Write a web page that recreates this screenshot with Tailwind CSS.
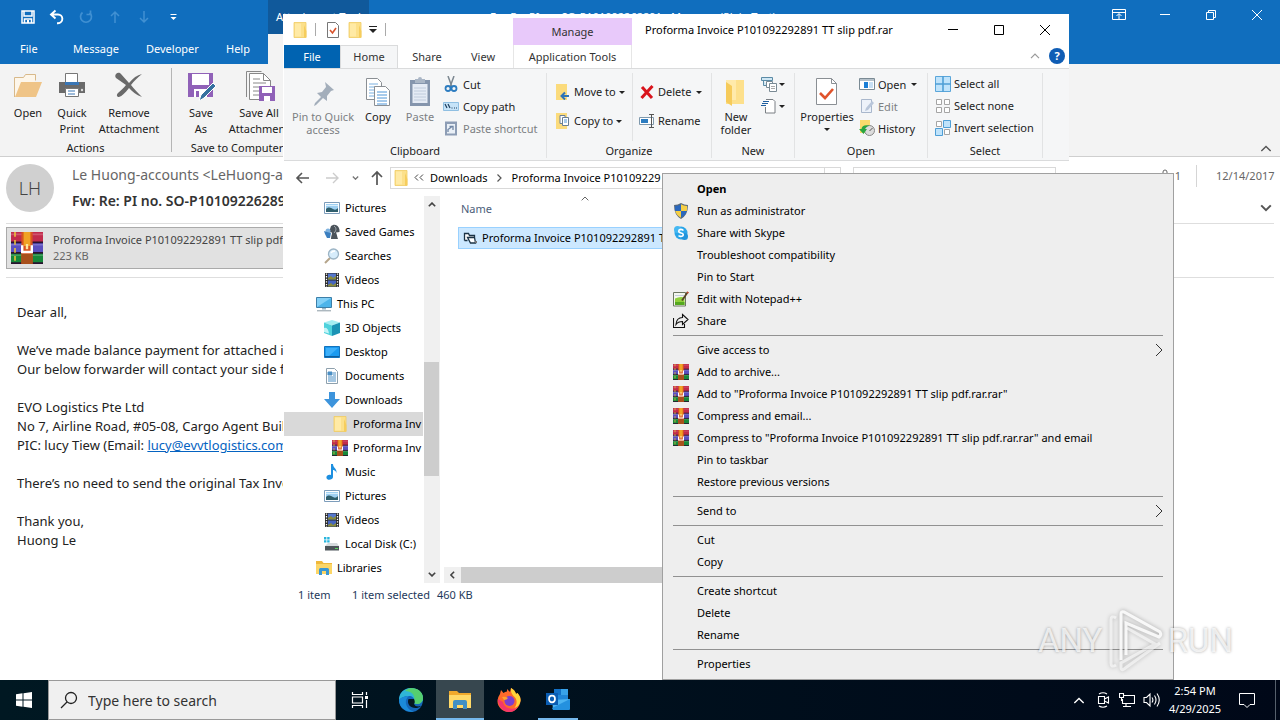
<!DOCTYPE html>
<html lang="en">
<head>
<meta charset="utf-8">
<title>Desktop</title>
<script src="https://cdn.jsdelivr.net/npm/@tailwindcss/browser@4"></script>
</head>
<body class="font-['Noto_Sans','Open_Sans',sans-serif] text-[11px] leading-[14px] text-[#1b1b1b]">

<!-- Icon sprite -->
<svg class="hidden" aria-hidden="true">
  <symbol id="rar" viewBox="0 0 16 16">
    <rect x="0" y="0" width="16" height="5.4" fill="#c22b4c"/><rect x="0" y="5.4" width="16" height="5" fill="#5a4fc0"/><rect x="0" y="10.4" width="16" height="5.6" fill="#17883a"/>
    <path d="M0 1.2h16M0 6.4h16M0 11.6h16" stroke="#fff" stroke-opacity=".2" stroke-width=".8"/>
    <path d="M0 5.2h16M0 10.4h16M0 15.6h16" stroke="#2a1230" stroke-width=".9"/>
    <path d="M2 0v16" stroke="#e9c13a" stroke-width=".8" stroke-dasharray="2.4 1.600"/>
    <rect x="5.2" y="0" width="5.6" height="16" fill="#d9541f"/><rect x="5.2" y="11" width="5.6" height="5" fill="#a8501c"/>
    <rect x="6.3" y="0" width="3.4" height="7" fill="#f0a224"/>
    <path d="M5.6 6.6v3.400h4.800V6.600" fill="none" stroke="#fff" stroke-width="1.200"/><path d="M8 6v2.600" stroke="#fbe6a0" stroke-width="1.200"/>
  </symbol>
  <symbol id="folder" viewBox="0 0 14 16">
    <path d="M1 .5h12v15H1z" fill="#fce08a" stroke="#f0cb62" stroke-width=".8"/><path d="M11 3l2.400 6v6.500H11z" fill="#f6cd5c"/><path d="M2 1.500h6v13H2z" fill="#ffeaa5"/>
  </symbol>
  <symbol id="caret" viewBox="0 0 6 3"><path d="M0 0h6L3 3z" fill="#222"/></symbol>
  <symbol id="up" viewBox="0 0 10 6"><path d="M1 5.200l4-4 4 4" fill="none" stroke="currentColor" stroke-width="1.200"/></symbol>
  <symbol id="down" viewBox="0 0 10 6"><path d="M1 .8l4 4 4-4" fill="none" stroke="currentColor" stroke-width="1.700"/></symbol>
  <symbol id="right" viewBox="0 0 8 14"><path d="M1 1l6 6-6 6" fill="none" stroke="#333" stroke-width="1"/></symbol>
  <symbol id="pictures" viewBox="0 0 16 16"><path d="M.5 2.500h15v11H.5z" fill="#fff" stroke="#7d9dbb"/><path d="M2 4h12v8H2z" fill="#9fd0f2"/><path d="M2 9c3-3 5-1 7 0s3 1 5-1v4H2z" fill="#2f5f6d"/><path d="M2 5.500h12" stroke="#d9effc"/></symbol>
  <symbol id="games" viewBox="0 0 16 16"><path d="M7 2l2-1c5-1 7 4 6.500 7L12 8.500c1 2 1 4 2 6.500H7c0-3 1-4 1-6.500L5 8z" fill="#4b535b"/><path d="M10 2c3 2 2 5 0 7" stroke="#a7afb5" fill="none"/><circle cx="4" cy="7" r="2.500" fill="#7fb2df"/><path d="M0 7l3 1 4 1-1 5H3L1 10z" fill="#3b7fc0"/></symbol>
  <symbol id="searches" viewBox="0 0 16 16"><path d="M6 10L1 15" stroke="#b5a58b" stroke-width="2"/><circle cx="9.500" cy="6" r="5" fill="#d6ecfb" stroke="#9bb3c4" stroke-width="1.300"/><path d="M7 5c1-2 3-2 4-2" stroke="#fff" stroke-width="1.300" fill="none"/></symbol>
  <symbol id="videos" viewBox="0 0 16 16"><path d="M1 1h14v14H1z" fill="#2b2b2b"/><path d="M4 1.500h8v6H4z" fill="#5577cc"/><path d="M4 8.500h8v6H4z" fill="#4565c0"/><path d="M4 6l3-2 2 2 3-2v3.500H4zM4 13l3-2 2 2 3-2v3.500H4z" fill="#8a8c3a"/><path d="M2.500 1.500v14M13.500 1.500v14" stroke="#fff" stroke-width="1.300" stroke-dasharray="1.300 1.300"/></symbol>
  <symbol id="pc" viewBox="0 0 16 16"><path d="M.5 1.500h15v10H.5z" fill="#4db4ea" stroke="#3d7fa8"/><path d="M1 2h14L1 11z" fill="#83d0f7"/><path d="M6 12h4v1.500H6z" fill="#9bb6c6"/><path d="M1 14.800h14" stroke="#8a9aa4"/></symbol>
  <symbol id="objects" viewBox="0 0 16 16"><path d="M8 0l8 2.500L8 5.500 0 2.500z" fill="#a6eef2"/><path d="M0 2.500l8 3V16l-8-3z" fill="#4fd2dc"/><path d="M16 2.500l-8 3V16l8-3z" fill="#1b93b5"/><path d="M0 8q4-1 5 5.500L0 12z" fill="#c4f5f7"/></symbol>
  <symbol id="desk" viewBox="0 0 16 16"><path d="M.5 2.500h15v11H.5z" fill="#1a9af0" stroke="#1273bd"/><path d="M2 4h12l-9 8H2z" fill="#3eb0fa"/><path d="M1 12.500h14" stroke="#0d5e9e"/></symbol>
  <symbol id="docs" viewBox="0 0 16 16"><path d="M2.500.5h8l3 3v12h-11z" fill="#fff" stroke="#8ea0ad"/><path d="M4 4h4v3H4zM4 9h8M4 11h8M4 13h8M9 5h3M9 7h3" fill="#4a8ec4" stroke="#4a8ec4"/></symbol>
  <symbol id="dl" viewBox="0 0 16 16"><path d="M5 0h6v7h5l-8 9-8-9h5z" fill="#3d94dc"/></symbol>
  <symbol id="music" viewBox="0 0 16 16"><path d="M7 0h2c0 4 4 4 3.500 9-1-3-3-3-3.500-3v7c0 3-6 4-6.500 1C2 11 5 10 7 11z" fill="#1d8fe0"/></symbol>
  <symbol id="disk" viewBox="0 0 16 16"><path d="M0 1h2.400v2.400H0zM3.200 1h2.400v2.400H3.200zM0 4.200h2.400v2.400H0zM3.200 4.200h2.400v2.400H3.200z" fill="#28b5dd"/><path d="M4 7h9l2 3H1z" fill="#d5dadd"/><path d="M1 10h14v4.500H1z" fill="#4d555a"/><path d="M11 12.500h3" stroke="#58d65d"/></symbol>
  <symbol id="lib" viewBox="0 0 16 16"><path d="M0 1h6l1.500 2H16v11H0z" fill="#f0b83a"/><path d="M0 4h16v10H0z" fill="#fcd667"/><path d="M3 15V9.500q0-1.500 1.500-1.500h7Q13 8 13 9.500V15h-3v-4H6v4z" fill="#3b97d3"/></symbol>
</svg>

<div class="relative flex h-screen flex-col overflow-hidden bg-white">

  <!-- Mail window -->
  <main class="flex min-h-0 flex-1 flex-col overflow-hidden bg-white">
    <header class="flex h-16 shrink-0 bg-[#106ebe] text-white">
      <div class="flex w-[268px] shrink-0 flex-col">
        <div class="flex h-[34px] items-center gap-[13px] pl-5">
          <button aria-label="Save" class="w-4"><svg class="size-4" viewBox="0 0 16 16"><path d="M2 2h12v12H2zM4 2v5h8V2M4.500 14v-4h7v4" fill="none" stroke="#fff" stroke-width="1.500"/><path d="M7 11h2v3H7z" fill="#fff"/></svg></button>
          <button aria-label="Undo" class="w-4"><svg class="size-4" viewBox="0 0 16 16"><path d="M6.500 1.500L2 5.500l4.500 4M2 5.500h7a4.300 4.300 0 010 8.700H8" fill="none" stroke="#fff" stroke-width="1.900"/></svg></button>
          <button aria-label="Redo" class="w-4"><svg class="size-4" viewBox="0 0 16 16"><path d="M4.500 3.500a5.500 5.500 0 107 0M12.500 1.500v4h-4" fill="none" stroke="#4090d2" stroke-width="1.700"/></svg></button>
          <button aria-label="Previous" class="w-4"><svg class="size-4" viewBox="0 0 16 16"><path d="M8 14V3M4 7l4-4 4 4" fill="none" stroke="#4090d2" stroke-width="1.500"/></svg></button>
          <button aria-label="Next" class="w-4"><svg class="size-4" viewBox="0 0 16 16"><path d="M8 2v11M4 9l4 4 4-4" fill="none" stroke="#4090d2" stroke-width="1.500"/></svg></button>
          <button aria-label="Customize" class="w-4"><svg class="size-4" viewBox="0 0 16 16"><path d="M5.500 5.500h6" stroke="#fff"/><path d="M5.500 8h6l-3 3z" fill="#fff"/></svg></button>
        </div>
        <nav class="flex h-[30px] items-center pl-5">
          <button class="w-[53px] text-left">File</button><button class="w-[73px] text-left">Message</button><button class="w-20 text-left">Developer</button><button>Help</button>
        </nav>
      </div>
      <div class="flex w-[101px] shrink-0 flex-col">
        <div class="h-[34px] bg-[#10599b] pl-2 leading-[34px] whitespace-nowrap">Attachment Tools</div>
        <div class="h-[30px] bg-[#f3f3f3]"></div>
      </div>
      <div class="ml-[121px] h-[34px] flex-1 leading-[34px] whitespace-nowrap">Fw: Re: PI no. SO-P101092262891 - Message (Plain Text)</div>
      <div class="flex h-[30px] shrink-0 items-center gap-[30px] pr-[15px]">
        <button aria-label="Ribbon options"><svg class="h-4 w-4" viewBox="0 0 16 16"><path d="M1.500 2.500h13v10h-13zM1.500 5.500h13M8 12V7M5.500 9L8 6.500 10.500 9" fill="none" stroke="#fff"/></svg></button>
        <button aria-label="Minimize"><svg class="h-4 w-4" viewBox="0 0 16 16"><path d="M3 7.500h10" stroke="#fff"/></svg></button>
        <button aria-label="Restore"><svg class="h-4 w-4" viewBox="0 0 16 16"><path d="M3.500 5.500h7v7h-7zM5.500 5.500v-2h7v7h-2" fill="none" stroke="#fff"/></svg></button>
        <button aria-label="Close"><svg class="h-4 w-4" viewBox="0 0 16 16"><path d="M3 3l10 10M13 3L3 13" stroke="#fff"/></svg></button>
      </div>
    </header>

    <section class="flex h-[93px] shrink-0 border-b border-[#cfcfcf] bg-[#f3f3f3]">
      <div class="flex w-[171px] shrink-0 flex-col">
        <div class="flex h-[77px] pt-1.5 pl-1.5 text-center">
          <button class="flex w-11 flex-col items-center"><svg class="h-8 w-8" viewBox="0 0 32 32"><path d="M2.500 27V7.500h9l2-3h10v6" fill="#fdf6ea" stroke="#d8b98a"/><path d="M3 27L9 12h21l-6 15z" fill="#efc487"/></svg><span class="mt-[3px] leading-4">Open</span></button>
          <button class="flex w-11 flex-col items-center"><svg class="h-8 w-8" viewBox="0 0 32 32"><path d="M3 12h26v11H3z" fill="#6a6a6a"/><path d="M9.500 3.500h12v10h-12z" fill="#fff" stroke="#777"/><path d="M9 12h14v3H9z" fill="#3a76b5"/><path d="M9.500 18.500h13v8h-13z" fill="#fff" stroke="#777"/><path d="M12 21h7M12 24h7" stroke="#3a76b5"/><circle cx="26" cy="20" r="1.200" fill="#ddd"/></svg><span class="mt-[3px] leading-4">Quick<br>Print</span></button>
          <button class="flex w-[70px] flex-col items-center"><svg class="h-8 w-8" viewBox="0 0 32 32"><path d="M3 4c2-2 4-1 5 0l8 9c4-5 8-8 13-9-4 3-8 7-11 11 3 4 7 8 11 12-6-2-10-6-13-9-4 5-7 8-10 9-2 0-3-2-1-4 3-3 6-5 8-8L3 8C2 7 2 5 3 4z" fill="#6a6a6a"/></svg><span class="mt-[3px] leading-4">Remove<br>Attachment</span></button>
        </div>
        <div class="text-center">Actions</div>
      </div>
      <div class="mt-1 h-[84px] w-px shrink-0 bg-[#b5b5b5]"></div>
      <div class="flex w-[130px] shrink-0 flex-col">
        <div class="flex h-[77px] pt-1.5 text-center">
          <button class="flex w-[58px] flex-col items-center"><svg class="h-8 w-8" viewBox="0 0 32 32"><path d="M3 3h25v24H3z" fill="#9061b8"/><path d="M7 4h17v11H7z" fill="#fff"/><path d="M9 19h13v8H9z" fill="#fff"/><path d="M11 21h3v6h-3z" fill="#9061b8"/><path d="M14 31l2-6 12-12 3 3-12 12z" fill="#35719f" stroke="#fff"/></svg><span class="mt-[3px] leading-4">Save<br>As</span></button>
          <button class="flex w-[58px] flex-col items-center whitespace-nowrap"><svg class="h-8 w-8" viewBox="0 0 32 32"><path d="M3.500 27V1.500h15" fill="none" stroke="#888"/><path d="M6.500 29.500v-26h14l7 7v19z" fill="#fff" stroke="#888"/><path d="M20.500 3.500v7h7M10 13h13M10 17h13M10 21h8M10 25h6M10 9h7" fill="none" stroke="#888"/><path d="M16 16h16v15H16z" fill="#9061b8"/><path d="M19 17h10v6H19zM21 26h6v5h-6z" fill="#fff"/></svg><span class="mt-[3px] leading-4">Save All<br>Attachment</span></button>
        </div>
        <div class="text-center whitespace-nowrap">Save to Computer</div>
      </div>
      <button aria-label="Collapse ribbon" class="mt-auto mr-2 mb-1 ml-auto text-[#555]"><svg class="h-[7px] w-3" viewBox="0 0 10 6"><use href="#up"/></svg></button>
    </section>

    <section class="mx-1.5 flex h-[67px] shrink-0 border-b border-[#dedede] pt-[7px]">
      <div class="flex size-12 shrink-0 items-center justify-center rounded-full bg-[#d0d0d0] text-lg font-light text-[#444]">LH</div>
      <div class="ml-[18px] flex flex-col whitespace-nowrap">
        <span class="text-sm leading-[22px] text-[#666]">Le Huong-accounts &lt;LeHuong-a</span>
        <span class="mt-1 text-sm leading-[22px] font-semibold text-[#333]">Fw: Re: PI no. SO-P10109226289</span>
      </div>
      <div class="ml-auto flex flex-col text-[#666]">
        <div class="flex h-6 items-center">
          <svg class="h-4 w-3" viewBox="0 0 12 16"><path d="M2 5v6a3 3 0 006 0V4a2 2 0 00-4 0v7" fill="none" stroke="#666"/></svg><span class="pl-1">1</span>
          <span class="mr-4 ml-[15px] h-[22px] w-px bg-[#d5d5d5]"></span><span class="w-[61px] pl-[3px]">12/14/2017</span>
        </div>
        <button aria-label="Expand" class="mt-4 mr-0.5 ml-auto text-[#555]"><svg class="h-2 w-3"><use href="#down"/></svg></button>
      </div>
    </section>

    <div class="mx-1.5 shrink-0 border-b border-[#dedede] pt-[3px] pb-2">
      <button class="flex h-[42px] w-[300px] items-center overflow-hidden border border-[#aaa] bg-[#e1e1e1] pl-1 text-left whitespace-nowrap">
        <svg class="size-8 shrink-0"><use href="#rar"/></svg>
        <span class="ml-2.5 leading-4 text-[#444]">Proforma Invoice P101092292891 TT slip pdf<br><span class="text-[#666]">223 KB</span></span>
      </button>
    </div>

    <article class="pt-[25px] pl-[17px] text-[13px] leading-[19px] whitespace-nowrap text-[#222]">
      <p>Dear all,</p><br>
      <p>We’ve made balance payment for attached i</p>
      <p>Our below forwarder will contact your side f</p><br>
      <p>EVO Logistics Pte Ltd</p>
      <p>No 7, Airline Road, #05-08, Cargo Agent Build</p>
      <p>PIC: lucy Tiew (Email: <a href="#" class="text-[#0563c1] underline">lucy@evvtlogistics.com</a></p><br>
      <p>There’s no need to send the original Tax Invo</p><br>
      <p>Thank you,</p>
      <p>Huong Le</p>
    </article>
  </main>

  <!-- File manager window -->
  <section class="absolute top-[14px] left-[283px] flex h-[593px] w-[786px] flex-col bg-white pl-px">
    <header class="flex h-[55px] shrink-0 border-b border-[#dadbdc]">
      <div class="flex w-[229px] shrink-0 flex-col">
        <div class="flex h-[31px] items-center pl-[9px]">
          <svg class="h-4 w-3.5"><use href="#folder"/></svg><span class="ml-2 h-[13px] w-px bg-[#aaa]"></span>
          <button aria-label="Properties" class="ml-2.5"><svg class="h-4 w-3.5" viewBox="0 0 14 16"><path d="M1.500.5h8l3 3v12h-11z" fill="#fff" stroke="#777"/><path d="M4 8l2.500 3L10 6" fill="none" stroke="#d9532c" stroke-width="1.600"/></svg></button>
          <button aria-label="New folder" class="ml-2"><svg class="h-4 w-3.5"><use href="#folder"/></svg></button>
          <button aria-label="Customize" class="ml-[7px]"><svg class="h-[7px] w-2" viewBox="0 0 8 7"><path d="M0 .5h8" stroke="#222"/><path d="M0 3h8L4 7z" fill="#222"/></svg></button>
          <span class="ml-2 h-[13px] w-px bg-[#aaa]"></span>
        </div>
        <nav class="flex h-[23px] items-stretch text-[#333]">
          <button class="w-14 bg-[#0063b1] text-white">File</button>
          <button class="w-[58px] border border-b-0 border-[#dadbdc] bg-[#f5f6f7]">Home</button>
          <button class="w-[58px]">Share</button>
          <button class="w-[54px]">View</button>
        </nav>
      </div>
      <div class="flex w-[119px] shrink-0 flex-col pt-1 text-center text-[#333]">
        <div class="h-[27px] bg-[#e8c9fa] leading-[28px]">Manage</div>
        <button class="h-[23px] border-x border-[#e6e6e6]">Application Tools</button>
      </div>
      <h1 class="ml-[13px] flex h-[31px] items-center whitespace-nowrap text-black">Proforma Invoice P101092292891 TT slip pdf.rar</h1>
      <div class="ml-auto flex flex-col">
        <div class="flex h-[31px] items-center gap-[30px] pr-4">
          <button aria-label="Minimize"><svg class="size-4" viewBox="0 0 16 16"><path d="M3 7.500h10" stroke="#000"/></svg></button>
          <button aria-label="Maximize"><svg class="size-4" viewBox="0 0 16 16"><path d="M3.500 3.500h9v9h-9z" fill="none" stroke="#000"/></svg></button>
          <button aria-label="Close"><svg class="size-4" viewBox="0 0 16 16"><path d="M3 3l10 10M13 3L3 13" stroke="#000"/></svg></button>
        </div>
        <div class="flex h-[22px] items-center justify-end gap-[9px] pr-1 text-[#999]">
          <button aria-label="Collapse ribbon"><svg class="h-1.5 w-2.5"><use href="#up"/></svg></button>
          <button aria-label="Help" class="flex size-4 items-center justify-center rounded-full bg-[#0f5db5] font-bold text-white">?</button>
        </div>
      </div>
    </header>

    <div class="flex h-[92px] shrink-0 border-b border-[#dadbdc] bg-[#f5f6f7] pt-1 pb-0.5 text-[#222]">
      <div class="flex w-[263px] shrink-0 flex-col justify-between border-r border-[#e2e3e4]">
        <div class="flex h-[68px] pl-1.5 leading-[13px]">
          <button class="flex w-[66px] flex-col items-center text-[#7c7f83]"><svg class="mt-1.5 h-7 w-7" viewBox="0 0 28 28"><path d="M16 3l9 8-3 1-4 5 0 5-4-3-7 7-2 1 1-3 6-6-4-4 5-1 4-5z" fill="#a3aebb"/></svg><span class="mt-[3px]">Pin to Quick access</span></button>
          <button class="flex w-11 flex-col items-center"><svg class="mt-[3px] h-8 w-7" viewBox="0 0 28 32"><path d="M2.500 2.500h11l4 4v17h-15z" fill="#fff" stroke="#8a8f94"/><path d="M5 8h9M5 11h9M5 14h9M5 17h9M5 20h9" stroke="#7ab0e0"/><path d="M10.500 10.500h11l4 4v15h-15z" fill="#fff" stroke="#8a8f94"/><path d="M13 16h10M13 19h10M13 22h10M13 25h10M13 28h10" stroke="#4f96d8"/></svg><span class="mt-0.5">Copy</span></button>
          <button class="flex w-10 flex-col items-center text-[#7c7f83]"><svg class="mt-[3px] h-8 w-7" viewBox="0 0 28 32"><path d="M4 4h20v26H4z" fill="#8595ad"/><path d="M6.500 8h15v19h-15z" fill="#e5ebf5"/><path d="M9 3h3a2 2 0 014 0h3v4H9z" fill="#aab6c6"/><path d="M8 12h12M8 15h12M8 18h12M8 21h12M8 24h12" stroke="#c0cbdc"/></svg><span class="mt-0.5">Paste</span></button>
          <div class="ml-[3px] flex flex-col whitespace-nowrap">
            <button class="flex h-[22px] items-center gap-1"><svg class="size-4" viewBox="0 0 16 16"><path d="M5 0l4 11M11 0L7 11" stroke="#7c8790" stroke-width="1.500"/><circle cx="5" cy="12.500" r="2.500" fill="none" stroke="#2c7cc0" stroke-width="1.800"/><circle cx="11" cy="12.500" r="2.500" fill="none" stroke="#2c7cc0" stroke-width="1.800"/></svg>Cut</button>
            <button class="flex h-[22px] items-center gap-1"><svg class="size-4" viewBox="0 0 16 16"><path d="M.5 4.500h15v8H.5z" fill="#c6e3f8" stroke="#8fbfe2"/><path d="M2 6l2 4M5 6l2 4M8.500 10h1M11 10h1M13 10h1" stroke="#1d3f5e" stroke-width="1.200"/></svg>Copy path</button>
            <button class="flex h-[22px] items-center gap-1 text-[#7c7f83]"><svg class="size-4" viewBox="0 0 16 16"><path d="M2 1.500h12v14H2z" fill="#8d9db5"/><path d="M4 4h8v9.500H4z" fill="#eaf0f7"/><path d="M5 12V9.500L8.500 7M6.500 6.500H10V10" fill="none" stroke="#7187a6" stroke-width="1.300"/></svg>Paste shortcut</button>
          </div>
        </div>
        <div class="text-center">Clipboard</div>
      </div>
      <div class="flex w-[165px] shrink-0 flex-col justify-between border-r border-[#e2e3e4]">
        <div class="flex h-[68px] pl-2">
          <div class="flex w-[78px] flex-col gap-[7px] border-r border-[#e2e3e4] pt-2">
            <button class="flex h-[22px] items-center gap-[3px]"><svg class="size-4 shrink-0" viewBox="0 0 16 16"><path d="M1 0h11v16H1z" fill="#fbdb7c"/><path d="M14 12H7M10 8.500L6.500 12l3.500 3.500" fill="none" stroke="#2e74b8" stroke-width="2"/></svg>Move to<svg class="h-[3px] w-1.5"><use href="#caret"/></svg></button>
            <button class="flex h-[22px] items-center gap-[3px]"><svg class="size-4 shrink-0" viewBox="0 0 16 16"><path d="M1 0h11v16H1z" fill="#fbdb7c"/><path d="M5 2.500h5v8H5z" fill="#fff" stroke="#6a7f94"/><path d="M7.500 4.500h6v8h-6z" fill="#fff" stroke="#6a7f94"/><path d="M9 7h3M9 9h3" stroke="#4f96d8"/></svg>Copy to<svg class="h-[3px] w-1.5"><use href="#caret"/></svg></button>
          </div>
          <div class="flex flex-col gap-[7px] pt-2 pl-1.5">
            <button class="flex h-[22px] items-center gap-[3px]"><svg class="size-4 shrink-0" viewBox="0 0 16 16"><path d="M3 3l10 11M13.500 2L2.500 14" stroke="#d9141c" stroke-width="3"/></svg>Delete<svg class="ml-0.5 h-[3px] w-1.5"><use href="#caret"/></svg></button>
            <button class="flex h-[22px] items-center gap-[3px]"><svg class="size-4 shrink-0" viewBox="0 0 16 16"><path d="M.5 4.500h14v7H.5z" fill="#fff" stroke="#7f99ad"/><path d="M2 6h7v4H2z" fill="#2c7cc0"/><path d="M10 1.500h5M10 14.500h5M12.500 1.500v13" stroke="#555"/></svg>Rename</button>
          </div>
        </div>
        <div class="text-center">Organize</div>
      </div>
      <div class="flex w-[83px] shrink-0 flex-col justify-between border-r border-[#e2e3e4]">
        <div class="flex h-[68px] pl-1 leading-[13px]">
          <button class="flex w-10 flex-col items-center"><svg class="mt-[3px] h-8 w-7" viewBox="0 0 28 32"><path d="M4 4h18v24H4z" fill="#fde08c"/><path d="M4 4h10v20H4z" fill="#ffeaab"/><path d="M4 6l6 4v20l-6-4z" fill="#f6cb5b"/></svg><span class="mt-0.5">New folder</span></button>
          <div class="flex flex-col pl-[5px]">
            <button aria-label="New item" class="flex h-[22px] items-center gap-0.5"><svg class="size-4" viewBox="0 0 16 16"><path d="M.5 1.500h11v3H.5zM2.500 4.500v5h4" fill="#cfe7f4" stroke="#5b8ba6"/><path d="M5.500 5.500h6v6h-6z" fill="#fff" stroke="#7a8a94"/><path d="M8.500 7.500h7v8h-7z" fill="#fff" stroke="#7a8a94"/><path d="M10 10.500h4M10 12.500h4" stroke="#aaa"/></svg><svg class="h-[3px] w-1.5"><use href="#caret"/></svg></button>
            <button aria-label="Easy access" class="flex h-[22px] items-center gap-0.5"><svg class="size-4" viewBox="0 0 16 16"><path d="M5 1.500h7l2 2v11.500H4.500V9" fill="#fff" stroke="#7a7f84"/><path d="M2 3.500h6M1 5.500h6M0 7.500h5" stroke="#1f5fa0"/></svg><svg class="h-[3px] w-1.5"><use href="#caret"/></svg></button>
          </div>
        </div>
        <div class="text-center">New</div>
      </div>
      <div class="flex w-[133px] shrink-0 flex-col justify-between border-r border-[#e2e3e4]">
        <div class="flex h-[68px] pl-1 leading-[13px]">
          <button class="flex w-14 flex-col items-center"><svg class="mt-[3px] h-8 w-7" viewBox="0 0 28 32"><path d="M3.500 2.500h15l5 5v21h-20z" fill="#fff" stroke="#8a8f94"/><path d="M18.500 2.500v5h5" fill="none" stroke="#8a8f94"/><path d="M7 17l5 5 8-9" fill="none" stroke="#e0532b" stroke-width="2.600"/></svg><span class="mt-0.5">Properties</span><svg class="mt-[5px] h-[3px] w-1.5"><use href="#caret"/></svg></button>
          <div class="flex flex-col pl-1">
            <button class="flex h-[22px] items-center gap-[3px]"><svg class="size-4 shrink-0" viewBox="0 0 16 16"><path d="M.5 2.500h15v11H.5z" fill="#fff" stroke="#7a8a94"/><path d="M1 3h14v2H1z" fill="#b5c1ca"/><path d="M5 6h4v6H5z" fill="#1b7fd6"/><path d="M10 7h4M10 9h4M10 11h4" stroke="#8fc0ea"/></svg>Open<svg class="ml-0.5 h-[3px] w-1.5"><use href="#caret"/></svg></button>
            <button class="flex h-[22px] items-center gap-[3px] text-[#7c7f83]"><svg class="size-4 shrink-0" viewBox="0 0 16 16"><path d="M2.500 1.500h10v13h-10z" fill="#edf2fa" stroke="#a9b7cc"/><path d="M6 13l1-3 6-7 2 2-6 7z" fill="#b9c6da"/></svg>Edit</button>
            <button class="flex h-[22px] items-center gap-[3px]"><svg class="size-4 shrink-0" viewBox="0 0 16 16"><path d="M1 0h10v13H1z" fill="#fbdb6c"/><circle cx="10.500" cy="10.500" r="5" fill="#dcdcdc" stroke="#888"/><path d="M10.500 11l3-3" stroke="#555"/><path d="M0 9l4.500 5L8 9H6q.500-2 4.500-3.500Q3 4 2.500 9z" fill="#2ba640"/></svg>History</button>
          </div>
        </div>
        <div class="text-center">Open</div>
      </div>
      <div class="flex w-[115px] shrink-0 flex-col justify-between border-r border-[#e2e3e4]">
        <div class="flex h-[68px] flex-col pl-[7px] whitespace-nowrap">
          <button class="flex h-[22px] items-center gap-[3px]"><svg class="size-4" viewBox="0 0 16 16"><path d="M.5.5h15v15H.5z" fill="#bfe3fb" stroke="#5aa6da"/><path d="M8 0v16M0 8h16" stroke="#4f9fd6" stroke-width="1.600"/></svg>Select all</button>
          <button class="flex h-[22px] items-center gap-[3px]"><svg class="size-4" viewBox="0 0 16 16"><path d="M1.500 1.500h5v5h-5zM9.500 1.500h5v5h-5zM1.500 9.500h5v5h-5zM9.500 9.500h5v5h-5z" fill="#fff" stroke="#a5a5a5"/></svg>Select none</button>
          <button class="flex h-[22px] items-center gap-[3px]"><svg class="size-4" viewBox="0 0 16 16"><path d="M1.500 1.500h5v5h-5zM9.500 9.500h5v5h-5z" fill="#fff" stroke="#a5a5a5"/><path d="M8.500.5h7v7h-7zM.5 8.500h7v7h-7z" fill="#bfe3fb" stroke="#4f9fd6"/></svg>Invert selection</button>
        </div>
        <div class="text-center">Select</div>
      </div>
    </div>

    <div class="flex h-[33px] shrink-0 items-center pr-[13px]">
      <div class="flex w-[106px] shrink-0 items-center pl-[11px]">
        <button aria-label="Back"><svg class="h-4 w-4" viewBox="0 0 16 16"><path d="M14 8H2M7 3L2 8l5 5" fill="none" stroke="#555" stroke-width="1.600"/></svg></button>
        <button aria-label="Forward" class="ml-[13px]"><svg class="h-4 w-4" viewBox="0 0 16 16"><path d="M2 8h12M9 3l5 5-5 5" fill="none" stroke="#ccc" stroke-width="1.400"/></svg></button>
        <button aria-label="Recent" class="ml-3 text-[#777]"><svg class="h-1 w-[7px]" viewBox="0 0 10 6"><path d="M1 .8l4 4 4-4" fill="none" stroke="#777" stroke-width="2"/></svg></button>
        <button aria-label="Up" class="ml-[10px]"><svg class="h-4 w-4" viewBox="0 0 16 16"><path d="M8 15V2M3 7l5-5 5 5" fill="none" stroke="#555" stroke-width="1.700"/></svg></button>
      </div>
      <div class="flex h-[22px] flex-1 items-center border border-[#d9d9d9] pl-[3px] whitespace-nowrap text-black">
        <svg class="h-4 w-3.5 shrink-0"><use href="#folder"/></svg>
        <svg class="ml-1.5 h-[7px] w-2.5" viewBox="0 0 10 7"><path d="M4 .5l-3 3 3 3M9 .5l-3 3 3 3" fill="none" stroke="#444"/></svg>
        <button class="ml-1.5">Downloads</button><svg class="mr-2.5 ml-[9px] h-2 w-[5px]" viewBox="0 0 5 8"><path d="M.5 .5L4 4 .5 7.500" fill="none" stroke="#555" stroke-width="1.200"/></svg>
        <button>Proforma Invoice P10109229</button>
        <span class="ml-auto h-full w-4 border-l border-[#d9d9d9]"></span>
      </div>
      <input type="text" aria-label="Search folder" class="ml-3 h-[22px] w-[203px] border border-[#d9d9d9]">
    </div>

    <div class="flex min-h-0 flex-1 pt-0.5">
      <nav class="flex w-[139px] shrink-0 flex-col overflow-hidden whitespace-nowrap text-black">
        <a href="#" class="flex h-6 shrink-0 items-center gap-[5px] pl-10"><svg class="size-4 shrink-0"><use href="#pictures"/></svg>Pictures</a>
        <a href="#" class="flex h-6 shrink-0 items-center gap-[5px] pl-10"><svg class="size-4 shrink-0"><use href="#games"/></svg>Saved Games</a>
        <a href="#" class="flex h-6 shrink-0 items-center gap-[5px] pl-10"><svg class="size-4 shrink-0"><use href="#searches"/></svg>Searches</a>
        <a href="#" class="flex h-6 shrink-0 items-center gap-[5px] pl-10"><svg class="size-4 shrink-0"><use href="#videos"/></svg>Videos</a>
        <a href="#" class="flex h-6 shrink-0 items-center gap-[5px] pl-8"><svg class="size-4 shrink-0"><use href="#pc"/></svg>This PC</a>
        <a href="#" class="flex h-6 shrink-0 items-center gap-[5px] pl-10"><svg class="size-4 shrink-0"><use href="#objects"/></svg>3D Objects</a>
        <a href="#" class="flex h-6 shrink-0 items-center gap-[5px] pl-10"><svg class="size-4 shrink-0"><use href="#desk"/></svg>Desktop</a>
        <a href="#" class="flex h-6 shrink-0 items-center gap-[5px] pl-10"><svg class="size-4 shrink-0"><use href="#docs"/></svg>Documents</a>
        <a href="#" class="flex h-6 shrink-0 items-center gap-[5px] pl-10"><svg class="size-4 shrink-0"><use href="#dl"/></svg>Downloads</a>
        <a href="#" class="flex h-6 shrink-0 items-center gap-[5px] bg-[#d9d9d9] pl-12"><svg class="size-4 shrink-0"><use href="#folder"/></svg>Proforma Inv</a>
        <a href="#" class="flex h-6 shrink-0 items-center gap-[5px] pl-12"><svg class="size-4 shrink-0"><use href="#rar"/></svg>Proforma Inv</a>
        <a href="#" class="flex h-6 shrink-0 items-center gap-[5px] pl-10"><svg class="size-4 shrink-0"><use href="#music"/></svg>Music</a>
        <a href="#" class="flex h-6 shrink-0 items-center gap-[5px] pl-10"><svg class="size-4 shrink-0"><use href="#pictures"/></svg>Pictures</a>
        <a href="#" class="flex h-6 shrink-0 items-center gap-[5px] pl-10"><svg class="size-4 shrink-0"><use href="#videos"/></svg>Videos</a>
        <a href="#" class="flex h-6 shrink-0 items-center gap-[5px] pl-10"><svg class="size-4 shrink-0"><use href="#disk"/></svg>Local Disk (C:)</a>
        <a href="#" class="flex h-6 shrink-0 items-center gap-[5px] pl-8"><svg class="size-4 shrink-0"><use href="#lib"/></svg>Libraries</a>
      </nav>
      <div class="ml-px flex w-4 shrink-0 flex-col bg-[#f0f0f0]">
        <button aria-label="Scroll up" class="flex h-[17px] w-full items-center justify-center"><svg class="h-[5px] w-2" viewBox="0 0 10 6"><path d="M1 5.200l4-4 4 4" fill="none" stroke="#444" stroke-width="2"/></svg></button>
        <div class="mt-[149px] h-[114px] w-[15px] bg-[#cdcdcd]"></div>
        <button aria-label="Scroll down" class="mt-auto flex h-[17px] w-full items-center justify-center"><svg class="h-[5px] w-2" viewBox="0 0 10 6"><path d="M1 .8l4 4 4-4" fill="none" stroke="#444" stroke-width="2"/></svg></button>
      </div>
      <div class="ml-1 flex min-w-0 flex-1 flex-col">
        <table class="w-full border-collapse">
          <thead><tr><th class="h-[31px] pr-0 pl-[17px] text-left align-top font-normal text-[#4c607a]"><div class="flex"><span class="pt-1.5">Name</span><svg class="ml-[88px] h-[5px] w-2.5 text-[#666]" viewBox="0 0 10 6"><use href="#up"/></svg></div></th></tr></thead>
          <tbody><tr><td class="pl-3.5"><div class="flex h-[22px] items-center gap-[3px] border border-[#99d1ff] bg-[#cce8ff] pl-1 whitespace-nowrap text-black">
            <svg class="size-4" viewBox="0 0 16 16"><path d="M1.500 10.500V3.500h4l1 2h5v2M1.500 10.500h3M4.500 7.500h7l1 5.500h-5z" fill="#fff" stroke="#1b3346" stroke-width="1.300"/><path d="M12 11h2v2h-2z" fill="#777"/></svg>Proforma Invoice P101092292891 T</div></td></tr></tbody>
        </table>
        <div class="mt-auto flex h-4 bg-[#f0f0f0]">
          <button aria-label="Scroll left" class="flex w-[17px] items-center justify-center"><svg class="h-2 w-[5px]" viewBox="0 0 6 10"><path d="M5 1L1 5l4 4" fill="none" stroke="#444" stroke-width="2"/></svg></button>
          <div class="w-[500px] bg-[#cdcdcd]"></div>
        </div>
      </div>
    </div>
    <footer class="flex h-6 shrink-0 items-center pl-3.5 text-[#1e395b]"><span class="w-[54px]">1 item</span><span class="w-[85px] whitespace-nowrap">1 item selected</span><span>460 KB</span></footer>
  </section>

  <!-- Context menu -->
  <div role="menu" class="absolute top-[173px] left-[662px] flex w-[512px] flex-col border border-[#a0a0a0] bg-[#eee] py-1 text-black">
    <button role="menuitem" class="flex h-[22px] items-center pl-[34px] font-bold">Open</button>
    <button role="menuitem" class="flex h-[22px] items-center gap-2 pl-2.5"><svg class="size-4" viewBox="0 0 16 16"><path d="M8 0q3 2 7 2 0 10-7 14Q1 12 1 2q4 0 7-2z" fill="#5c6a78"/><path d="M8 1.300V8H2.200Q1.800 5.500 2 3q3.500 0 6-1.700zM8 8h5.800Q12.500 12.500 8 14.800z" fill="#2b68bd"/><path d="M8 1.300Q10.500 3 14 3q.2 2.500-.2 5H8zM8 8v6.800Q3.500 12.500 2.200 8z" fill="#f6cf45"/></svg>Run as administrator</button>
    <button role="menuitem" class="flex h-[22px] items-center gap-2 pl-2.5"><svg class="size-4" viewBox="0 0 16 16"><circle cx="8" cy="8" r="6.500" fill="#2aa5e8"/><circle cx="4.500" cy="4.500" r="3.500" fill="#45b8f2"/><circle cx="11.500" cy="11.500" r="3.500" fill="#2194dc"/><path d="M10.500 5.500Q8 3.500 6 5.200 5 7.500 8 8q3 .6 2 2.600-2 1.500-4.500 0" fill="none" stroke="#fff" stroke-width="1.600"/></svg>Share with Skype</button>
    <button role="menuitem" class="flex h-[22px] items-center pl-[34px]">Troubleshoot compatibility</button>
    <button role="menuitem" class="flex h-[22px] items-center pl-[34px]">Pin to Start</button>
    <button role="menuitem" class="flex h-[22px] items-center gap-2 pl-2.5"><svg class="size-4" viewBox="0 0 16 16"><path d="M.5 1.500h12v13.500H.5z" fill="#f3f6ee" stroke="#6c7662"/><path d="M2 7.500q5-2.500 9.500-1V14H2z" fill="#8fd03a"/><path d="M2 11h9.500v3H2z" fill="#55a81f"/><path d="M2 4.500h9" stroke="#c3cddb"/><path d="M14.800 1L9 9.500" stroke="#5a4326" stroke-width="1.800"/><path d="M14 1l1.500 1" stroke="#d1452c" stroke-width="1.500"/></svg>Edit with Notepad++</button>
    <button role="menuitem" class="flex h-[22px] items-center gap-2 pl-2.5"><svg class="size-4" viewBox="0 0 16 16"><path d="M.5 5v9.500h11V11M9.500 1.500L15 6.500l-5.500 5V8.500Q5 8.500 3 11.500q.500-7 6.500-7z" fill="none" stroke="#111" stroke-width="1.100"/></svg>Share</button>
    <hr class="mx-2.5 my-[3px] border-[#919191]">
    <button role="menuitem" class="flex h-[22px] items-center pr-2.5 pl-[34px]">Give access to<svg class="ml-auto h-3.5 w-2"><use href="#right"/></svg></button>
    <button role="menuitem" class="flex h-[22px] items-center gap-2 pl-2.5"><svg class="size-4"><use href="#rar"/></svg>Add to archive...</button>
    <button role="menuitem" class="flex h-[22px] items-center gap-2 pl-2.5"><svg class="size-4"><use href="#rar"/></svg>Add to "Proforma Invoice P101092292891 TT slip pdf.rar.rar"</button>
    <button role="menuitem" class="flex h-[22px] items-center gap-2 pl-2.5"><svg class="size-4"><use href="#rar"/></svg>Compress and email...</button>
    <button role="menuitem" class="flex h-[22px] items-center gap-2 pl-2.5"><svg class="size-4"><use href="#rar"/></svg>Compress to "Proforma Invoice P101092292891 TT slip pdf.rar.rar" and email</button>
    <button role="menuitem" class="flex h-[22px] items-center pl-[34px]">Pin to taskbar</button>
    <button role="menuitem" class="flex h-[22px] items-center pl-[34px]">Restore previous versions</button>
    <hr class="mx-2.5 my-[3px] border-[#919191]">
    <button role="menuitem" class="flex h-[22px] items-center pr-2.5 pl-[34px]">Send to<svg class="ml-auto h-3.5 w-2"><use href="#right"/></svg></button>
    <hr class="mx-2.5 my-[3px] border-[#919191]">
    <button role="menuitem" class="flex h-[22px] items-center pl-[34px]">Cut</button>
    <button role="menuitem" class="flex h-[22px] items-center pl-[34px]">Copy</button>
    <hr class="mx-2.5 my-[3px] border-[#919191]">
    <button role="menuitem" class="flex h-[22px] items-center pl-[34px]">Create shortcut</button>
    <button role="menuitem" class="flex h-[22px] items-center pl-[34px]">Delete</button>
    <button role="menuitem" class="flex h-[22px] items-center pl-[34px]">Rename</button>
    <hr class="mx-2.5 my-[3px] border-[#919191]">
    <button role="menuitem" class="flex h-[22px] items-center pl-[34px]">Properties</button>
  </div>

  <!-- Watermark -->
  <div class="pointer-events-none absolute right-[47px] bottom-[46px] flex h-[66px] w-[195px] items-center justify-between font-['Liberation_Sans_Narrow','Roboto',sans-serif] text-[33px] leading-[66px] text-white/75 text-shadow-[0_0_3px_rgb(0_0_0/0.35)]">
    <span>ANY</span>
    <svg class="h-[66px] w-14 drop-shadow-[0_0_2px_rgb(0_0_0/0.35)]" viewBox="0 0 56 66"><path d="M14 52V6q0-3 3-2l36 20q2 3-1 5L19 15v32" fill="none" stroke="#fff" stroke-opacity=".85" stroke-width="3"/><path d="M9 10Q4 7 4 12v43q0 5 5 2M53 35L17 61q-3 2-3-2v-4l34-19L20 20" fill="none" stroke="#fff" stroke-opacity=".6" stroke-width="3"/></svg>
    <span>RUN</span>
  </div>

  <!-- Taskbar -->
  <footer class="flex h-10 shrink-0 bg-linear-to-r from-[#001822] to-[#000818] text-white">
    <button aria-label="Start" class="flex w-12 items-center justify-center"><svg class="size-4" viewBox="0 0 16 16"><path d="M0 2.200l6.500-.9v6.200H0zM7.500 1.200L16 0v7.500H7.500zM0 8.500h6.500v6.200L0 13.800zM7.500 8.500H16V16l-8.500-1.200z" fill="#fff"/></svg></button>
    <label class="flex w-72 items-center border border-[#999] bg-[#f0f0f0] pl-[11px]">
      <svg class="size-[18px]" viewBox="0 0 18 18"><circle cx="11" cy="7" r="5.500" fill="none" stroke="#222" stroke-width="1.300"/><path d="M7 11l-6 6" stroke="#222" stroke-width="1.300"/></svg>
      <input type="text" aria-label="Search" placeholder="Type here to search" class="ml-2.5 w-56 bg-transparent pt-0.5 text-sm outline-none placeholder:text-[#333]">
    </label>
    <button aria-label="Task view" class="flex w-12 items-center justify-center"><svg class="h-4 w-[18px]" viewBox="0 0 18 16"><path d="M1.500 0v2.500h10V0M1.500 5h10v6h-10zM1.500 16v-2.500h10V16M15.500 0v3M15.500 8v8" fill="none" stroke="#fff" stroke-width="1.200"/><path d="M14 4h3v3h-3z" fill="#fff"/></svg></button>
    <button aria-label="Edge" class="ml-0.5 flex w-[50px] items-center justify-center"><svg class="size-6" viewBox="0 0 24 24"><circle cx="12" cy="12" r="12" fill="#1466b8"/><path d="M0 12C0 4 6 0 12 0s12 4 12 10c0 4-3 6-6 6-3 0-4-1-3-3 1-3-2-5-5-5-5 0-8 2-10 4z" fill="#2fb5d6"/><path d="M12 0c7 0 12 4 12 10 0 4-3 6-6 6-3 0-4-1-3-3C17 7 12 3 6 3c2-2 4-3 6-3z" fill="#55cf70"/><path d="M10 8c-6 4-3 14 5 15.500C9 25 0 21 0 12c2-3 6-4 10-4z" fill="#1b8ad8"/><path d="M9.500 11c-2 5 2 9 7 9 2 0 4-.500 5.500-2-3 1-6 .500-7-2 1-1 1-3 0-5z" fill="#041722"/></svg></button>
    <button aria-label="File Explorer" class="flex w-12 items-center justify-center border-b-2 border-[#76b9ed] bg-[#37474f]"><svg class="mt-0.5 h-5 w-[22px]" viewBox="0 0 22 20"><path d="M0 1h8l2 2h12v15H0z" fill="#f0a92c"/><path d="M0 5h22v13H0z" fill="#ffd968"/><path d="M4 19v-7q0-2 2-2h10q2 0 2 2v7h-4v-4H8v4z" fill="#3f8fc4"/></svg></button>
    <button aria-label="Firefox" class="flex w-[50px] items-center justify-center"><svg class="size-6" viewBox="0 0 24 24"><path d="M3 6l1-4 2.500 3Q8 3.500 10 3.500V1l3 3 1-4q4 2 5 6l1.500-1Q24 9 23.500 13C23 19 18 24 12 24S0 19 .5 12.500Q.8 9 3 6z" fill="#ff6a2b"/><path d="M14 0q4 2 5 6l1.500-1Q24 9 23.500 13c-1 4-3 6-6 7 3-4 3-9-1-12-2-2-3-5-2.500-8z" fill="#ffd53a"/><path d="M.8 11C1 18 6 24 12 24c4 0 7-2 9-5-6 4-14 1-15-5z" fill="#f5366b"/><circle cx="12.500" cy="13" r="5" fill="#7b3fd0"/><path d="M5 9q3-1 6 1-1 2-4 2z" fill="#ffa52e"/></svg></button>
    <button aria-label="Outlook" class="ml-1 flex w-10 items-center justify-center border-b-2 border-[#76b9ed]"><svg class="h-[22px] w-6" viewBox="0 0 24 22"><path d="M8 1h14v18H8z" fill="#1271c8"/><path d="M15 1h7v6h-7z" fill="#38a3ea"/><path d="M8 7h14v5H8z" fill="#1f86d8"/><path d="M6 12l18-1v10H7z" fill="#4db4f2"/><path d="M6 20l18-9v10q0 1-1 1H7z" fill="#2491df"/><path d="M0 5h12v12H0z" fill="#0a5db3"/><ellipse cx="6" cy="11" rx="3" ry="3.300" fill="none" stroke="#fff" stroke-width="1.700"/></svg></button>
    <div class="ml-auto flex items-center">
      <button aria-label="Hidden icons" class="mr-[10px]"><svg class="h-[7px] w-3" viewBox="0 0 10 6"><use href="#up"/></svg></button>
      <svg class="mr-2 size-4" viewBox="0 0 16 16"><path d="M3.500 4.500h6v7h-6zM9.500 7l4-2v6l-4-2M4 2Q8-.5 12 2M4 14q4 2.500 8 0" fill="none" stroke="#fff" stroke-width="1.100"/></svg>
      <svg class="mr-2 size-4" viewBox="0 0 16 16"><path d="M5 3.500h10.500v8H3.500V7M7 11.500v3M4 14.500h8M.5 1.500h4v4h-4zM2.500 5.500V9" fill="none" stroke="#fff" stroke-width="1.100"/></svg>
      <svg class="mr-[7px] h-4 w-[18px]" viewBox="0 0 18 16"><path d="M1 5.500h2.500L7 2v12l-3.500-3.500H1zM9 5.500q1.800 2.500 0 5M11.500 3.500q3 4.500 0 9M14 1.500q4.500 6.500 0 13" fill="none" stroke="#fff" stroke-width="1.100"/></svg>
      <div class="w-[54px] text-center leading-[18px] whitespace-nowrap">2:54 PM<br>4/29/2025</div>
      <button aria-label="Notifications" class="ml-[17px]"><svg class="size-4" viewBox="0 0 16 16"><path d="M.5 1.500h15v11H11l-3 3-3-3H.5z" fill="none" stroke="#fff"/></svg></button>
      <span class="mr-1 ml-5 h-10 w-px bg-[#56606c]"></span>
    </div>
  </footer>
</div>
</body>
</html>
